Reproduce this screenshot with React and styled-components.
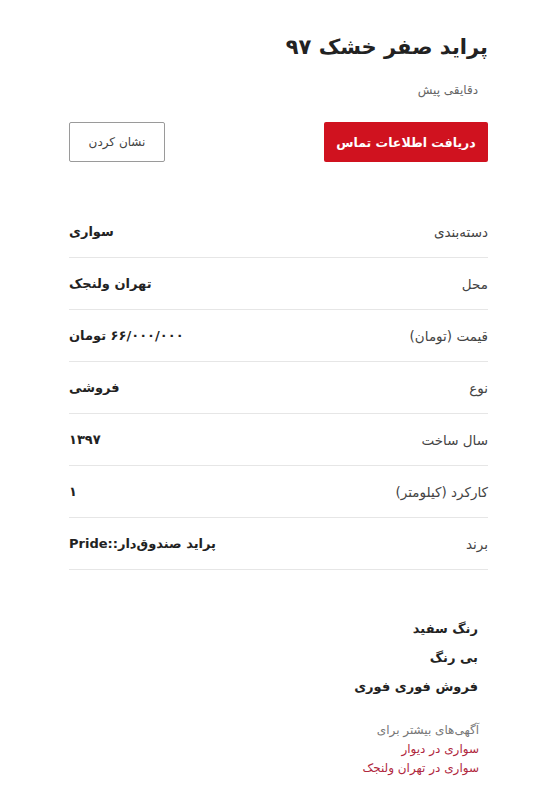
import React from "react";
import styled, { createGlobalStyle } from "styled-components";

const Global = createGlobalStyle`
  html, body { margin: 0; padding: 0; background: #fff; }
  body { font-family: "DejaVu Sans", "Noto Sans", sans-serif; }
`;

const Page = styled.div`
  direction: rtl;
  width: 419px;
  margin: 0 auto;
  padding-top: 30px;
  color: #222;
`;

const Title = styled.h1`
  margin: 0;
  font-size: 21px;
  font-weight: bold;
  line-height: 34px;
  color: #222;
`;

const Time = styled.div`
  margin: 17px 10px 0 0;
  font-size: 12px;
  line-height: 18px;
  color: #666;
`;

const Actions = styled.div`
  display: flex;
  justify-content: space-between;
  margin-top: 23px;
`;

const Button = styled.button`
  height: 40px;
  font-family: inherit;
  border-radius: 2px;
  cursor: pointer;
  padding: 0;
  font-size: ${(p) => (p.$primary ? "12.5px" : "12px")};
  width: ${(p) => (p.$primary ? "164px" : "96px")};
  background: ${(p) => (p.$primary ? "#d0121f" : "#fff")};
  color: ${(p) => (p.$primary ? "#fff" : "#444")};
  border: ${(p) => (p.$primary ? "none" : "1px solid #9a9a9a")};
  font-weight: ${(p) => (p.$primary ? "bold" : "normal")};
`;

const List = styled.div`
  margin-top: 44px;
`;

const Row = styled.div`
  display: flex;
  justify-content: space-between;
  align-items: center;
  height: 51px;
  border-bottom: 1px solid #e6e6e6;
`;

const Label = styled.span`
  font-size: 13.5px;
  color: #444;
`;

const Value = styled.span`
  font-size: 13px;
  font-weight: bold;
  color: #222;
`;

const Tags = styled.div`
  margin: 44px 10px 0 0;
  display: flex;
  flex-direction: column;
`;

const Tag = styled.div`
  font-size: 13px;
  font-weight: bold;
  line-height: 29px;
  color: #222;
`;

const More = styled.div`
  margin: 20px 9px 0 0;
  display: flex;
  flex-direction: column;
  font-size: 12px;
  line-height: 19px;
`;

const MoreTitle = styled.div`
  color: #777;
`;

const MoreLink = styled.a`
  color: #b0283e;
  text-decoration: none;
`;

const rows = [
  ["دسته‌بندی", "سواری"],
  ["محل", "تهران ولنجک"],
  ["قیمت (تومان)", "۶۶/۰۰۰/۰۰۰ تومان"],
  ["نوع", "فروشی"],
  ["سال ساخت", "۱۳۹۷"],
  ["کارکرد (کیلومتر)", "۱"],
  ["برند", "پراید صندوق‌دار::Pride"],
];

export default function App() {
  return (
    <Page>
      <Global />
      <Title>پراید صفر خشک ۹۷</Title>
      <Time>دقایقی پیش</Time>
      <Actions>
        <Button $primary>دریافت اطلاعات تماس</Button>
        <Button>نشان کردن</Button>
      </Actions>
      <List>
        {rows.map(([l, v]) => (
          <Row key={l}>
            <Label>{l}</Label>
            <Value>{v}</Value>
          </Row>
        ))}
      </List>
      <Tags>
        <Tag>رنگ سفید</Tag>
        <Tag>بی رنگ</Tag>
        <Tag>فروش فوری فوری</Tag>
      </Tags>
      <More>
        <MoreTitle>آگهی‌های بیشتر برای</MoreTitle>
        <MoreLink href="#">سواری در دیوار</MoreLink>
        <MoreLink href="#">سواری در تهران ولنجک</MoreLink>
      </More>
    </Page>
  );
}
